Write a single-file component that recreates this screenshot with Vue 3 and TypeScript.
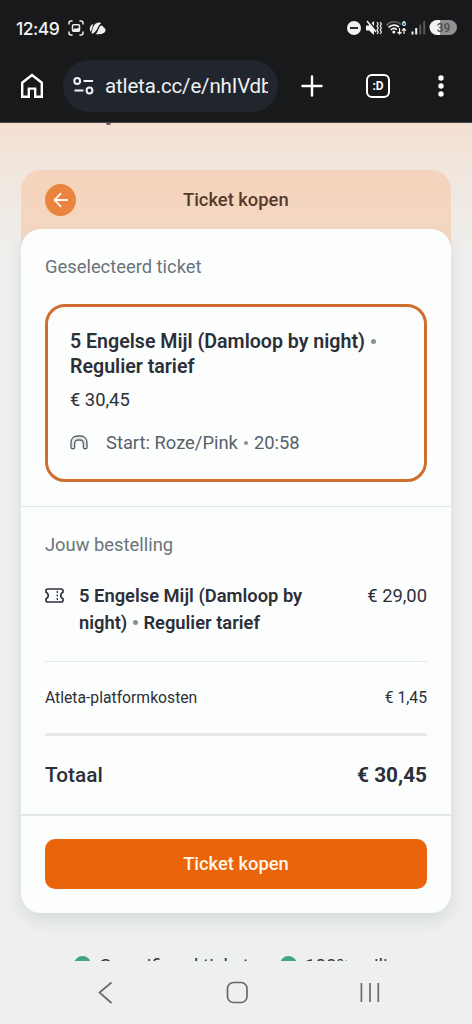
<script setup lang="ts">
interface OrderLine {
  label: string
  price: string
}

const fee: OrderLine = { label: 'Atleta-platformkosten', price: '€ 1,45' }
const total: OrderLine = { label: 'Totaal', price: '€ 30,45' }
const trustMarks: string[] = ['Geverifieerd ticket', '100% veilig']
</script>

<template>
  <div class="phone">
    <header class="browser">
      <div class="status">
        <span class="clock">12:49</span>
        <svg class="capture" width="16" height="16" viewBox="0 0 16 16" fill="none" stroke="#eee" stroke-width="1.5" stroke-linecap="round">
          <path d="M1 4V3a2 2 0 0 1 2-2h1M12 1h1a2 2 0 0 1 2 2v1M15 12v1a2 2 0 0 1-2 2h-1M4 15H3a2 2 0 0 1-2-2v-1" />
          <rect x="4.5" y="4.7" width="7" height="6.6" rx="1" />
          <path d="M5 10l2-2 1.300 1L10 7.500l1.500 2V11H5z" fill="#eee" stroke="none" />
        </svg>
        <svg class="leaf" width="17" height="13" viewBox="0 0 17 13" fill="#eee">
          <path d="M1.800 10C-.2 7.500.8 3.300 4.200 2L2.600 8z" />
          <path d="M2.500 11.700C3.400 7 4.500 1.400 8.600.7c1.800-.3 3.100.1 3.600.9-3.700.8-3.700 9.900-9.700 10.100z" />
          <path d="M6.500 12.200c2.800-2 2.700-7.200 5.600-8.800 1.500 0 2.300.8 2.400 2 1.600.4 2.300 1.800 2 3.400-.5 2.700-4 4-10 3.400z" />
        </svg>
        <svg class="signals" width="110" height="18" viewBox="0 0 110 18" fill="none">
          <circle cx="7" cy="9" r="7" fill="#f2f2f2" />
          <path d="M3 9h8" stroke="#18191b" stroke-width="1.800" />
          <path d="M19 6.500h3l5-4.500v14l-5-4.500h-3z" fill="#f2f2f2" />
          <path d="M21.500 1.500l8 10" stroke="#18191b" stroke-width="1.500" />
          <path d="M20 2l9 11" stroke="#f2f2f2" stroke-width="1.500" />
          <path d="M30 3l1.200 2L30 7l1.200 2L30 11l1.200 2-1.200 2M33.200 3l1.200 2-1.200 2 1.200 2-1.200 2 1.200 2-1.200 2" stroke="#f2f2f2" stroke-width="1.200" />
          <path d="M39.500 6.500C43 2 50 1.500 54 5.500" stroke="#66676a" stroke-width="1.500" />
          <path d="M41.500 8.500c3-3 7.500-3.200 10.500-.5M43.800 11c1.800-1.800 4.200-1.800 6-.3" stroke="#f2f2f2" stroke-width="1.700" />
          <circle cx="46.800" cy="13" r="1.500" fill="#f2f2f2" />
          <path d="M52.500 9v6m-2-2l2 2 2-2M57 15V9.500m-2 2l2-2 2 2" stroke="#f2f2f2" stroke-width="1.200" />
          <text x="54.700" y="7.200" class="wifi-no">6</text>
          <path d="M65.500 12.500V15.500M69.200 9v6.500" stroke="#f2f2f2" stroke-width="2" />
          <path d="M73.300 5.500v10M77.200 2v13.500" stroke="#58595b" stroke-width="2" />
          <path d="M90 1h4v15h-4a7.500 7.500 0 0 1 0-15z" fill="#f2f2f2" />
          <path d="M93 1h9.500a7.500 7.500 0 0 1 0 15H93z" fill="#919193" />
          <text x="96.500" y="12.900" text-anchor="middle" class="battery">39</text>
        </svg>
      </div>
      <div class="toolbar">
        <svg class="home" width="24" height="26" viewBox="0 0 24 26" fill="none" stroke="#fff" stroke-width="2.400">
          <path d="M2.200 23.800V9.700L12 2.100l9.800 7.600v14.100h-6.600v-8.200H8.800v8.200z" />
        </svg>
        <div class="address">
          <svg width="21" height="18" viewBox="0 0 21 18" fill="none" stroke="#f3f3f3" stroke-width="2">
            <circle cx="4.200" cy="4" r="2.900" /><path d="M10.500 4H20M1.500 13.500h9" />
            <circle cx="16.500" cy="13.500" r="2.900" />
          </svg>
          <div class="url">atleta.cc/e/nhIVdb</div>
        </div>
        <svg class="plus" width="22" height="22" viewBox="0 0 22 22" stroke="#fff" stroke-width="2.400" stroke-linecap="round"><path d="M1.500 11h19M11 1.500v19" /></svg>
        <div class="tabs">:D</div>
        <svg class="more" width="6" height="22" viewBox="0 0 6 22" fill="#fff"><circle cx="3" cy="3" r="2.700" /><circle cx="3" cy="11" r="2.700" /><circle cx="3" cy="19" r="2.700" /></svg>
      </div>
    </header>

    <main class="page">
      <i class="remnant"></i>
      <section class="ticket-card">
        <div class="card-head">
          <button class="back" aria-label="Terug">
            <svg width="16" height="16" viewBox="0 0 16 16" fill="none" stroke="#fff8ee" stroke-width="1.800" stroke-linecap="round" stroke-linejoin="round"><path d="M14.200 8H1.800M7.700 1.700L1.500 8l6.200 6.300" /></svg>
          </button>
          <h1>Ticket kopen</h1>
        </div>
        <div class="card-body">
          <div class="selected">
            <h2>Geselecteerd ticket</h2>
            <div class="choice">
              <div class="name">5 Engelse Mijl (Damloop by night) <i class="dot"></i><br>Regulier tarief</div>
              <div class="price">€ 30,45</div>
              <div class="start">
                <svg width="18" height="15" viewBox="0 0 18 15" fill="none" stroke="#59616b" stroke-width="1.400" stroke-linejoin="round">
                  <path d="M1 12.600V8C1 3.800 3.700 1 7.500 1h3C14.300 1 17 3.800 17 8v4.600c0 1.600-3.600 1.600-3.600 0V9c0-2.500-1.400-4-3.400-4H8C6 5 4.600 6.500 4.600 9v3.600c0 1.600-3.600 1.600-3.600 0z" />
                  <path d="M2.900 12.500V8c0-3 2-5 4.800-5h2.600c2.800 0 4.800 2 4.800 5v4.500" stroke="#b0b5ba" stroke-width=".7" />
                </svg>
                <span>Start: Roze/Pink <i class="dot small"></i> 20:58</span>
              </div>
            </div>
          </div>
          <div class="order">
            <h2>Jouw bestelling</h2>
            <div class="item">
              <svg width="19" height="15" viewBox="0 0 19 15" fill="none" stroke="#30323e" stroke-width="1.700" stroke-linejoin="round">
                <path d="M2.800 1h13.400c1 0 1.800.7 1.800 1.700v1.600c-3 1.100-3 5.300 0 6.400v1.600c0 1-.8 1.700-1.800 1.700H2.800C1.800 14 1 13.300 1 12.300v-1.600c3-1.100 3-5.300 0-6.400V2.700C1 1.700 1.800 1 2.800 1z" />
                <path d="M12.300 3v2m0 1.600v1.800m0 1.600v2" stroke-width="1.300" />
              </svg>
              <div class="item-name">5 Engelse Mijl (Damloop by<br>night) <i class="dot"></i> Regulier tarief</div>
              <span class="item-price">€ 29,00</span>
            </div>
            <div class="fee"><span>{{ fee.label }}</span><span>{{ fee.price }}</span></div>
            <div class="total"><span>{{ total.label }}</span><strong>{{ total.price }}</strong></div>
          </div>
          <div class="checkout"><button>Ticket kopen</button></div>
        </div>
      </section>
      <div class="trust">
        <span v-for="mark in trustMarks" :key="mark"><i></i><b>{{ mark }}</b></span>
      </div>
    </main>

    <nav class="system-nav">
      <svg width="472" height="63" viewBox="0 0 472 63" fill="none" stroke="#67696a" stroke-width="1.700">
        <path d="M111.500 21.500L99.500 31.500l12 10.500" />
        <rect x="227.500" y="21.500" width="19.500" height="20" rx="6" />
        <path d="M361.400 22v19M370 22v19M378.300 22v19" />
      </svg>
    </nav>
  </div>
</template>

<style>
html, body { margin: 0; background: #eef0ef; }
</style>

<style scoped>
* { box-sizing: border-box; }
.phone { width: 472px; height: 1024px; overflow: hidden; display: flex; flex-direction: column; background: #eef0ef; font-family: Roboto, "Liberation Sans", sans-serif; color: #2d2f38; }
button { border: 0; padding: 0; font: inherit; }
h1, h2 { margin: 0; }
.browser { height: 123px; flex: none; background: #18191b; border-bottom: 1px solid #49454a; }
.status { height: 56px; padding: 0 16px; display: flex; align-items: center; }
.clock { width: 44px; margin-right: 8px; color: #f2f2f2; font-size: 17.500px; font-weight: 500; font-family: Inter, Roboto, sans-serif; letter-spacing: -.5px; white-space: nowrap; }
.leaf { margin-left: 5px; }
.signals { margin-left: auto; margin-right: -1px; }
.wifi-no { font: 700 7.500px Roboto, sans-serif; fill: #f2f2f2; }
.battery { font: 500 12px Roboto, sans-serif; fill: #4b4c4e; }
.toolbar { height: 59px; display: flex; align-items: center; padding-left: 20px; }
.address { width: 215px; height: 52px; margin-left: 19px; padding-left: 10px; border-radius: 26px; display: flex; align-items: center; background: #21262e; }
.address svg { flex: none; }
.url { width: 163px; margin-left: 11px; overflow: hidden; white-space: nowrap; color: #eef0f3; font-size: 20.500px; letter-spacing: -.15px; line-height: 30px; }
.plus { margin-left: 23px; }
.tabs { width: 24px; height: 24px; margin-left: 43px; border: 2px solid #fff; border-radius: 6px; display: grid; place-items: center; color: #fff; font-size: 12px; font-weight: 700; line-height: 18px; }
.more { margin-left: 48px; }
.page { height: 838px; flex: none; position: relative; overflow: hidden; padding: 47px 21px 0; background: linear-gradient(#f4dfd1 0, #f1e6dd 45px, #eef0ef 145px); }
.remnant { position: absolute; left: 106px; top: 0; width: 5px; height: 2px; border-radius: 0 0 3px 3px; background: #665c58; }
.ticket-card { height: 743px; border-radius: 20px; background: linear-gradient(#f6d3bc 0, #f3d8c4 76px, transparent 77px); }
.card-head { height: 59px; display: flex; align-items: center; padding-left: 24px; }
.back { width: 31px; height: 32px; border-radius: 50%; display: grid; place-items: center; background: #ea843f; }
h1 { margin-left: 107px; color: #573a2b; font-size: 18.350px; line-height: 24px; font-weight: 500; }
.card-body { height: 684px; border-radius: 20px; background: #fcfefd; box-shadow: 0 8px 16px rgba(45, 65, 75, .11); }
.selected { height: 278px; padding: 25px 24px 0; border-bottom: 1px solid #e3e6e7; }
h2 { color: #6b737b; font-size: 18.350px; line-height: 25px; font-weight: 400; }
.choice { height: 178px; margin-top: 25px; padding: 22px 22px 0; border: 3px solid #ce6f30; border-radius: 20px; }
.name { font-size: 19.600px; line-height: 25px; font-weight: 600; white-space: nowrap; }
.dot { display: inline-block; width: 5px; height: 5px; margin: 0 1px; border-radius: 50%; background: #8c9094; vertical-align: 4px; }
.dot.small { width: 4px; height: 4px; margin: 0 1.500px; }
.price { margin-top: 8px; font-size: 18.350px; line-height: 25px; }
.start { margin-top: 18px; display: flex; align-items: center; gap: 18px; color: #59616b; font-size: 18.350px; line-height: 25px; white-space: nowrap; }
.order { height: 309px; padding: 25px 24px 0; border-bottom: 2px solid #e4e7e8; }
.item { height: 81px; margin-top: 24px; padding-top: 1px; display: flex; align-items: flex-start; border-bottom: 1px solid #e5e8e9; font-size: 18.350px; line-height: 27px; }
.item svg { margin-top: 6px; }
.item-name { margin-left: 15px; font-weight: 600; white-space: nowrap; }
.item-price { margin-left: auto; }
.fee { height: 74px; display: flex; justify-content: space-between; align-items: center; border-bottom: 3px solid #e6e8e9; font-size: 15.700px; }
.total { height: 78px; display: flex; align-items: center; justify-content: space-between; font-size: 20.800px; font-weight: 500; }
.total strong { font-weight: 700; }
.checkout { padding: 23px 24px; }
.checkout button { width: 100%; height: 50px; padding-bottom: 2px; border-radius: 10px; background: #e9640b; color: #fff8e9; font-size: 18.350px; font-weight: 500; }
.trust { display: flex; gap: 31px; padding: 42px 0 0 53px; color: #353637; font-size: 18.750px; line-height: 22px; white-space: nowrap; }
.trust span { display: flex; }
.trust i { width: 17px; height: 17px; margin-top: 1px; margin-right: 8px; border-radius: 50%; background: #43a582; }
.trust b { font-weight: 400; }
.system-nav { height: 63px; flex: none; background: #eef0ef; }
.system-nav svg { display: block; }
</style>
